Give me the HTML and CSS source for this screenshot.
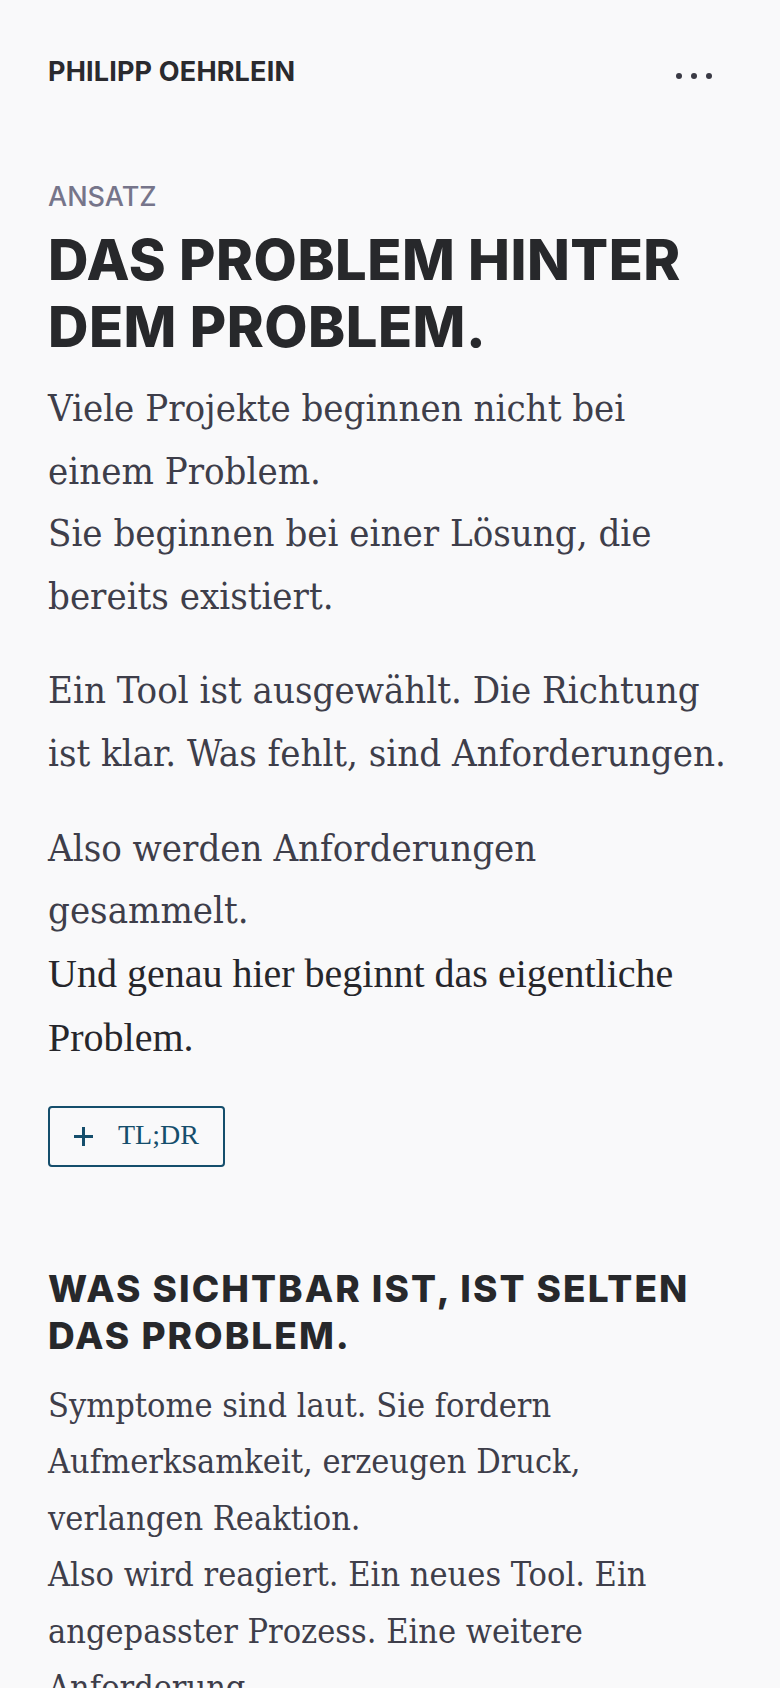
FILE: index.html
```html
<!DOCTYPE html>
<html lang="de">
<head>
<meta charset="utf-8">
<meta name="viewport" content="width=device-width, initial-scale=1">
<title>Ansatz – Philipp Oehrlein</title>
<link rel="stylesheet" href="styles.css">
</head>
<body>
  <header class="site-header">
    <a class="brand" href="#">PHILIPP OEHRLEIN</a>
    <button class="menu-toggle" type="button" aria-label="Menü">
      <svg class="menu-dots" width="36" height="6" viewBox="0 0 36 6" aria-hidden="true">
        <circle cx="3" cy="3" r="3"/>
        <circle cx="18" cy="3" r="3"/>
        <circle cx="33" cy="3" r="3"/>
      </svg>
    </button>
  </header>

  <main class="content">
    <section class="intro">
      <p class="eyebrow">ANSATZ</p>
      <h1 class="title">DAS PROBLEM HINTER DEM PROBLEM.</h1>
      <p class="lead">Viele Projekte beginnen nicht bei einem Problem.<br>Sie beginnen bei einer Lösung, die bereits existiert.</p>
      <p class="lead">Ein Tool ist ausgewählt. Die Richtung ist klar. Was fehlt, sind Anforderungen.</p>
      <p class="lead">Also werden Anforderungen gesammelt.<br><em class="emphasis">Und genau hier beginnt das eigentliche Problem.</em></p>
      <button class="tldr" type="button">
        <svg class="tldr-icon" width="21" height="21" viewBox="0 0 21 21" aria-hidden="true">
          <path d="M10.5 1v19M1 10.5h19"/>
        </svg>
        <span class="tldr-label">TL;DR</span>
      </button>
    </section>

    <section class="chapter">
      <h2 class="chapter-title">WAS SICHTBAR IST, IST SELTEN DAS PROBLEM.</h2>
      <p class="body">Symptome sind laut. Sie fordern Aufmerksamkeit, erzeugen Druck, verlangen Reaktion.<br>Also wird reagiert. Ein neues Tool. Ein angepasster Prozess. Eine weitere Anforderung.</p>
    </section>
  </main>
</body>
</html>
```
FILE: styles.css
```css
* {
  box-sizing: border-box;
}

html,
body {
  margin: 0;
  padding: 0;
  background: #f9f9fa;
}

body {
  font-family: "DejaVu Serif Condensed", "DejaVu Serif", serif;
  color: #3e3e4a;
}

/* ---------- header ---------- */
.site-header {
  display: flex;
  justify-content: space-between;
  align-items: flex-start;
  padding: 58px 48px 0;
}

.brand {
  font-family: Inter, "Liberation Sans", sans-serif;
  font-weight: 700;
  font-size: 27px;
  line-height: 27px;
  letter-spacing: 0.17px;
  color: #2a2a2e;
  text-decoration: none;
}

.menu-toggle {
  display: flex;
  padding: 15px 20px 0 10px;
  margin: 0;
  border: 0;
  background: none;
  cursor: pointer;
}

.menu-dots {
  display: block;
  fill: #3a3a44;
}

/* ---------- content ---------- */
.content {
  padding: 0 48px 80px;
}

.eyebrow {
  margin: 96px 0 0;
  font-family: Inter, "Liberation Sans", sans-serif;
  font-weight: 500;
  font-size: 27px;
  line-height: 32.4px;
  color: #76758a;
}

.title {
  margin: 13.5px 0 0;
  font-family: Inter, "Liberation Sans", sans-serif;
  font-weight: 800;
  font-size: 56px;
  line-height: 66.7px;
  letter-spacing: 0.5px;
  color: #27282b;
}

.lead {
  margin: 32.5px 0 0;
  font-size: 38px;
  line-height: 62.4px;
}

.title + .lead {
  margin-top: 17px;
}

.emphasis {
  font-family: "Liberation Serif", "Times New Roman", serif;
  font-style: normal;
  font-size: 40px;
  line-height: 64.5px;
  color: #26262b;
}

/* ---------- TL;DR toggle ---------- */
.tldr {
  display: inline-flex;
  align-items: center;
  gap: 24px;
  height: 61px;
  margin-top: 35px;
  padding: 0 24px 0 23px;
  border: 2px solid #154e6c;
  border-radius: 4px;
  background: transparent;
  color: #154e6c;
  cursor: pointer;
}

.tldr-icon {
  display: block;
  stroke: currentColor;
  stroke-width: 3;
  fill: none;
}

.tldr-label {
  font-family: "Liberation Serif", "Times New Roman", serif;
  font-size: 28px;
  line-height: 1;
  position: relative;
  top: -1px;
}

/* ---------- chapter ---------- */
.chapter-title {
  margin: 98px 0 0;
  font-family: Inter, "Liberation Sans", sans-serif;
  font-weight: 800;
  font-size: 37px;
  line-height: 47px;
  letter-spacing: 0.055em;
  color: #27282b;
}

.body {
  margin: 18px 0 0;
  font-size: 34px;
  line-height: 56.5px;
}
```
